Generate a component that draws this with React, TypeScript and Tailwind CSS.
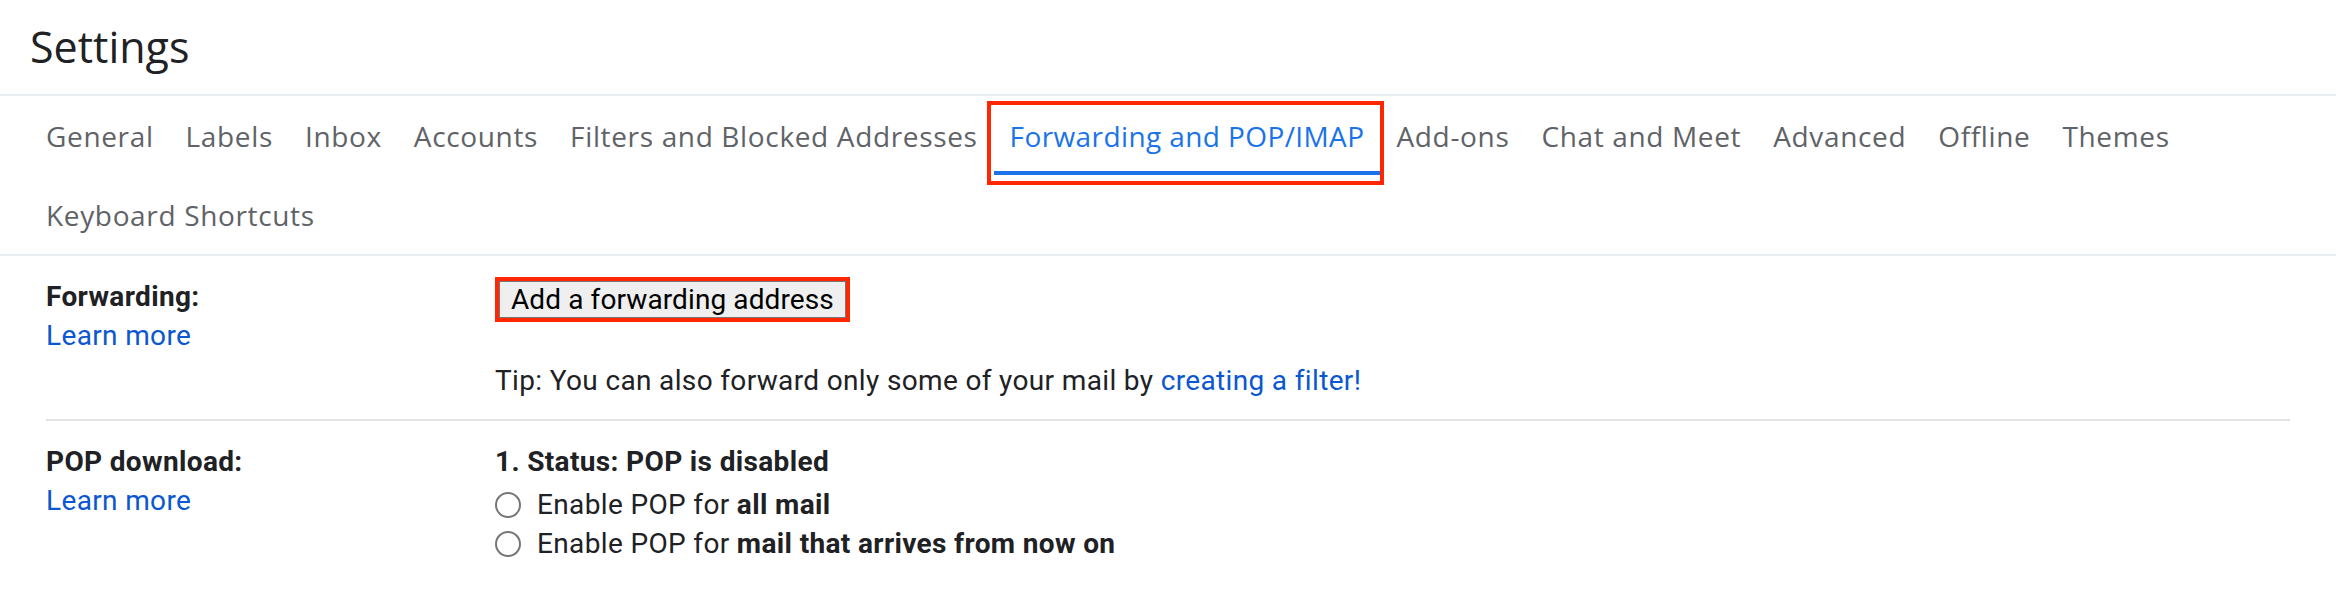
import React from "react";

const tabs = [
  "General",
  "Labels",
  "Inbox",
  "Accounts",
  "Filters and Blocked Addresses",
  "Forwarding and POP/IMAP",
  "Add-ons",
  "Chat and Meet",
  "Advanced",
  "Offline",
  "Themes",
  "Keyboard Shortcuts",
];

const active = "Forwarding and POP/IMAP";

function Tab({ label }: { label: string }) {
  const isActive = label === active;
  return (
    <div
      className={
        "relative flex h-[79px] items-center px-[16px] text-[28px] " +
        (isActive
          ? "tracking-[0.4px] text-[#1a73e8] shadow-[inset_0_-4px_0_#1a73e8]"
          : "tracking-[0.65px] text-[#5f6368]")
      }
    >
      {label}
      {isActive ? (
        <span className="pointer-events-none absolute top-[5px] -bottom-[10px] -left-[7px] -right-[4px] border-4 border-[#ff2600]" />
      ) : null}
    </div>
  );
}

function Radio({ children }: { children: React.ReactNode }) {
  return (
    <label className="flex items-center leading-[39px]">
      <span className="mr-[16px] h-[26px] w-[26px] shrink-0 rounded-full border-2 border-[#767676] bg-white" />
      <span>{children}</span>
    </label>
  );
}

function SettingRow({
  label,
  children,
  divider,
  className,
}: {
  label: string;
  children: React.ReactNode;
  divider?: boolean;
  className?: string;
}) {
  return (
    <div
      className={
        "grid grid-cols-[449px_1fr] " +
        (divider ? "border-b-2 border-[#e3e3e3] " : "") +
        (className ?? "")
      }
    >
      <div className="leading-[39px]">
        <div className="font-bold">{label}</div>
        <a className="text-[#0b57d0]" href="#">
          Learn more
        </a>
      </div>
      <div>{children}</div>
    </div>
  );
}

export default function App() {
  return (
    <div className="h-[592px] w-[2336px] overflow-hidden bg-white">
      <header className="flex h-[94px] items-center pl-[30px] font-['Open_Sans',sans-serif] text-[43px] text-[#202124]">
        Settings
      </header>

      <nav className="flex flex-wrap border-y-2 border-[#e9edf2] pl-[30px] pr-[60px] font-['Open_Sans',sans-serif]">
        {tabs.map((t) => (
          <Tab key={t} label={t} />
        ))}
      </nav>

      <main className="px-[46px] font-['Roboto',sans-serif] text-[28px] tracking-[0.35px] text-[#202124]">
        <SettingRow label="Forwarding:" divider className="pt-[21px] pb-[19px]">
          <div className="inline-flex border-4 border-[#ff2600]">
            <button className="border border-[#767676] bg-[#efefef] px-[11px] leading-[35px] tracking-[0.1px] text-black">
              Add a forwarding address
            </button>
          </div>
          <p className="mt-[39px] leading-[39px]">
            Tip: You can also forward only some of your mail by{" "}
            <a className="text-[#0b57d0]" href="#">
              creating a filter!
            </a>
          </p>
        </SettingRow>

        <SettingRow label="POP download:" className="pt-[21px]">
          <div className="font-bold leading-[39px]">1. Status: POP is disabled</div>
          <div className="mt-[4px]">
            <Radio>
              Enable POP for <b>all mail</b>
            </Radio>
            <Radio>
              Enable POP for <b>mail that arrives from now on</b>
            </Radio>
          </div>
        </SettingRow>
      </main>
    </div>
  );
}
